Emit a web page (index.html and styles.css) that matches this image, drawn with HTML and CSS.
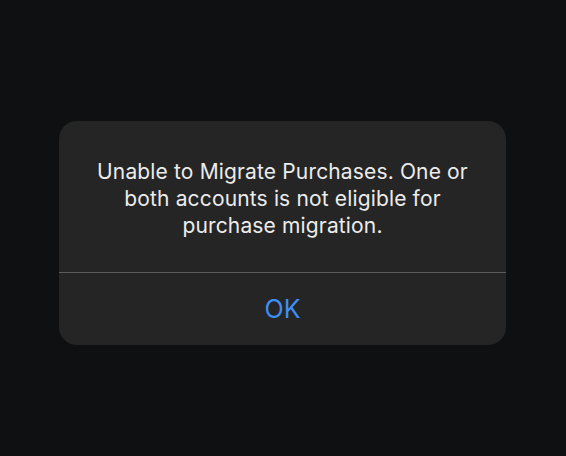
FILE: index.html
```html
<!DOCTYPE html>
<html>
<head>
<meta charset="utf-8">
<link rel="stylesheet" href="styles.css">
</head>
<body>
<div class="screen">
  <div class="alert">
    <div class="message">Unable to Migrate Purchases. One or both accounts is not eligible for purchase migration.</div>
    <div class="divider"></div>
    <div class="actions"><span class="ok">OK</span></div>
  </div>
</div>
</body>
</html>
```
FILE: styles.css
```css
html, body {
  margin: 0;
  padding: 0;
  background: #0f1012;
}
.screen {
  width: 566px;
  height: 456px;
  padding-top: 121px;
  box-sizing: border-box;
  display: flex;
  justify-content: flex-start;
  align-items: flex-start;
  padding-left: 59px;
}
.alert {
  width: 447px;
  height: 224px;
  background: #252525;
  border-radius: 18px;
  display: flex;
  flex-direction: column;
  font-family: Inter, "Noto Sans", sans-serif;
}
.message {
  height: 151px;
  box-sizing: border-box;
  padding: 37px 24px 0;
  color: #ececec;
  font-size: 21px;
  letter-spacing: 0.15px;
  line-height: 27px;
  text-align: center;
}
.divider {
  height: 1px;
  background: #5c5c5c;
}
.actions {
  flex: 1;
  display: flex;
  align-items: center;
  justify-content: center;
}
.ok {
  color: #3f8ef5;
  font-size: 25px;
  line-height: 30px;
}
```
